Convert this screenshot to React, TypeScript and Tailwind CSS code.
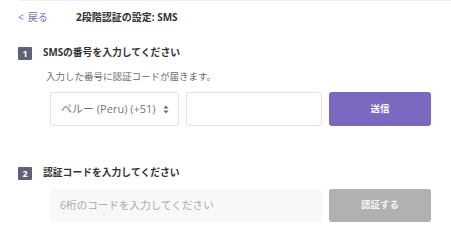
import React from "react";

const font = { fontFamily: '"Open Sans", "Noto Sans CJK JP", sans-serif' };

function Badge({ n }: { n: string }) {
  return (
    <div className="w-[14px] h-[13px] bg-[#5f6175] text-white text-[9px] font-bold leading-[13px] flex items-center justify-center rounded-[1px]">
      {n}
    </div>
  );
}

export default function App() {
  return (
    <div className="w-[451px] h-[245px] bg-white overflow-hidden" style={font}>
      <div className="ml-[20px] border-t border-[#f0f0f0]" />
      <div className="h-[34px] flex items-center pl-[18px] pb-[1px]">
        <span className="text-[#6f6fd6] text-[10px] flex items-center gap-[4px] w-[58px]">
          <span className="text-[10px]">&lt;</span>
          <span>戻る</span>
        </span>
        <span className="text-[#333] text-[10px] font-bold">2段階認証の設定: SMS</span>
      </div>
      <div className="h-[36px] flex items-center pl-[18px] gap-[11px]">
        <Badge n="1" />
        <span className="text-[#333] text-[9.8px] font-bold">SMSの番号を入力してください</span>
      </div>
      <div className="h-[12px] flex items-center pl-[46px] text-[#6b6b6b] text-[9.5px]">
        入力した番号に認証コードが届きます。
      </div>
      <div className="mt-[9px] pl-[50px] flex gap-[7px] h-[34px]">
        <div className="w-[129px] h-full border border-[#e1e1e1] rounded-[3px] flex items-center pl-[10px] pr-[9px] justify-between">
          <span className="text-[#777] text-[11px]">ペルー (Peru) (+51)</span>
          <svg width="6" height="9" viewBox="0 0 6 9">
            <path d="M0.5 3.5 L3 0.5 L5.5 3.5 Z" fill="#666" />
            <path d="M0.5 5.5 L3 8.5 L5.5 5.5 Z" fill="#666" />
          </svg>
        </div>
        <div className="w-[136px] h-full border border-[#e1e1e1] rounded-[3px]" />
        <div className="w-[102px] h-full bg-[#7b68c0] rounded-[3px] flex items-center justify-center text-white text-[9.5px] font-bold">
          送信
        </div>
      </div>
      <div className="mt-[40px] h-[14px] flex items-center pl-[18px] gap-[11px]">
        <Badge n="2" />
        <span className="text-[#333] text-[9.8px] font-bold">認証コードを入力してください</span>
      </div>
      <div className="mt-[9px] pl-[50px] flex gap-[7px] h-[33px]">
        <div className="w-[272px] h-full bg-[#f8f8f8] rounded-[3px] flex items-center pl-[10px]">
          <span className="text-[#aaa] text-[10.6px]">6桁のコードを入力してください</span>
        </div>
        <div className="w-[102px] h-full bg-[#b1b1b1] rounded-[3px] flex items-center justify-center text-[#f4f4f4] text-[9.5px] font-bold">
          認証する
        </div>
      </div>
    </div>
  );
}
